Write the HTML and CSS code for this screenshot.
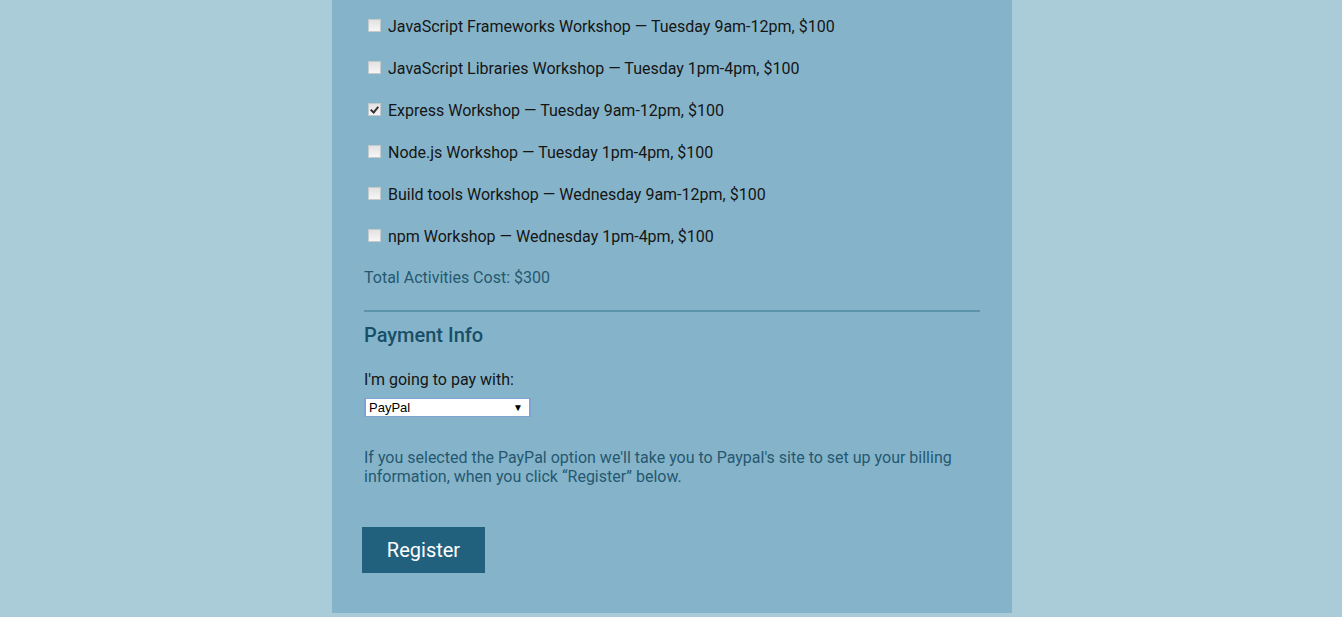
FILE: index.html
```html
<!DOCTYPE html>
<html lang="en">
<head>
<meta charset="utf-8">
<title>Register</title>
<link rel="stylesheet" href="styles.css">
</head>
<body>
<div class="container">
  <fieldset class="activities">
    <label class="activity"><input type="checkbox" class="cb"> JavaScript Frameworks Workshop — Tuesday 9am-12pm, $100</label>
    <label class="activity"><input type="checkbox" class="cb"> JavaScript Libraries Workshop — Tuesday 1pm-4pm, $100</label>
    <label class="activity"><input type="checkbox" class="cb" checked> Express Workshop — Tuesday 9am-12pm, $100</label>
    <label class="activity"><input type="checkbox" class="cb"> Node.js Workshop — Tuesday 1pm-4pm, $100</label>
    <label class="activity"><input type="checkbox" class="cb"> Build tools Workshop — Wednesday 9am-12pm, $100</label>
    <label class="activity"><input type="checkbox" class="cb"> npm Workshop — Wednesday 1pm-4pm, $100</label>
    <p class="total">Total Activities Cost: $300</p>
  </fieldset>
  <fieldset class="payment">
    <h2 class="legend">Payment Info</h2>
    <label class="pay-label" for="payment">I'm going to pay with:</label>
    <div class="select"><span>PayPal</span><span class="arrow">▼</span></div>
    <p class="info">If you selected the PayPal option we'll take you to Paypal's site to set up your billing information, when you click “Register” below.</p>
  </fieldset>
  <button class="register" type="button">Register</button>
</div>
</body>
</html>
```
FILE: styles.css
```css
html, body {
  margin: 0;
  padding: 0;
}
body {
  background: #aacbd8;
  font-family: Roboto, "Noto Sans", sans-serif;
  color: #111;
  padding-left: 2px;
}
.container {
  width: 616px;
  margin: 0 auto;
  padding: 5px 32px 40px;
  background: #85b4ca;
}
fieldset {
  border: 0;
  margin: 0;
  padding: 0;
}
.activity {
  display: flex;
  align-items: center;
  height: 42px;
  font-size: 16px;
  color: #151515;
  white-space: pre;
}
.cb {
  appearance: none;
  -webkit-appearance: none;
  width: 11px;
  height: 11px;
  margin: 0 3px 2px 4px;
  border: 1px solid #c4c9cc;
  background: linear-gradient(#e2e2e2, #f6f6f6);
  box-sizing: content-box;
  position: relative;
}
.cb:checked::after {
  content: "";
  position: absolute;
  left: 3px;
  top: 1px;
  width: 3px;
  height: 6px;
  border: solid #333;
  border-width: 0 2px 2px 0;
  transform: rotate(40deg);
}
.total {
  margin: 0;
  padding-top: 11px;
  font-size: 16px;
  color: #255870;
  height: 25px;
}
.payment {
  margin-top: 17px;
  border-top: 2px solid #5b93ab;
  padding-top: 11px;
}
.legend {
  margin: 0;
  font-size: 20px;
  font-weight: 500;
  color: #184f68;
  line-height: 24px;
}
.pay-label {
  display: block;
  margin-top: 23px;
  font-size: 16px;
  line-height: 20px;
  color: #151515;
}
.select {
  margin-top: 8px;
  height: 17px;
  border: 1px solid #7ea3d2;
  border-width: 1px 2px;
  background: #fff;
  display: flex;
  align-items: center;
  justify-content: space-between;
  font-family: "Liberation Sans", Arial, sans-serif;
  font-size: 13px;
  color: #000;
  padding: 0 0 0 3px;
  box-sizing: content-box;
  width: 160px;
}
.arrow {
  font-size: 10px;
  margin-right: 6px;
}
.info {
  margin: 31px 0 0;
  font-size: 16px;
  line-height: 19px;
  color: #255870;
}
.register {
  margin: 41px 0 0 -2px;
  width: 123px;
  height: 46px;
  border: 0;
  background: #22617e;
  color: #fff;
  font-family: Roboto, sans-serif;
  font-size: 20px;
  font-weight: 400;
  padding: 0;
  display: block;
}
```
